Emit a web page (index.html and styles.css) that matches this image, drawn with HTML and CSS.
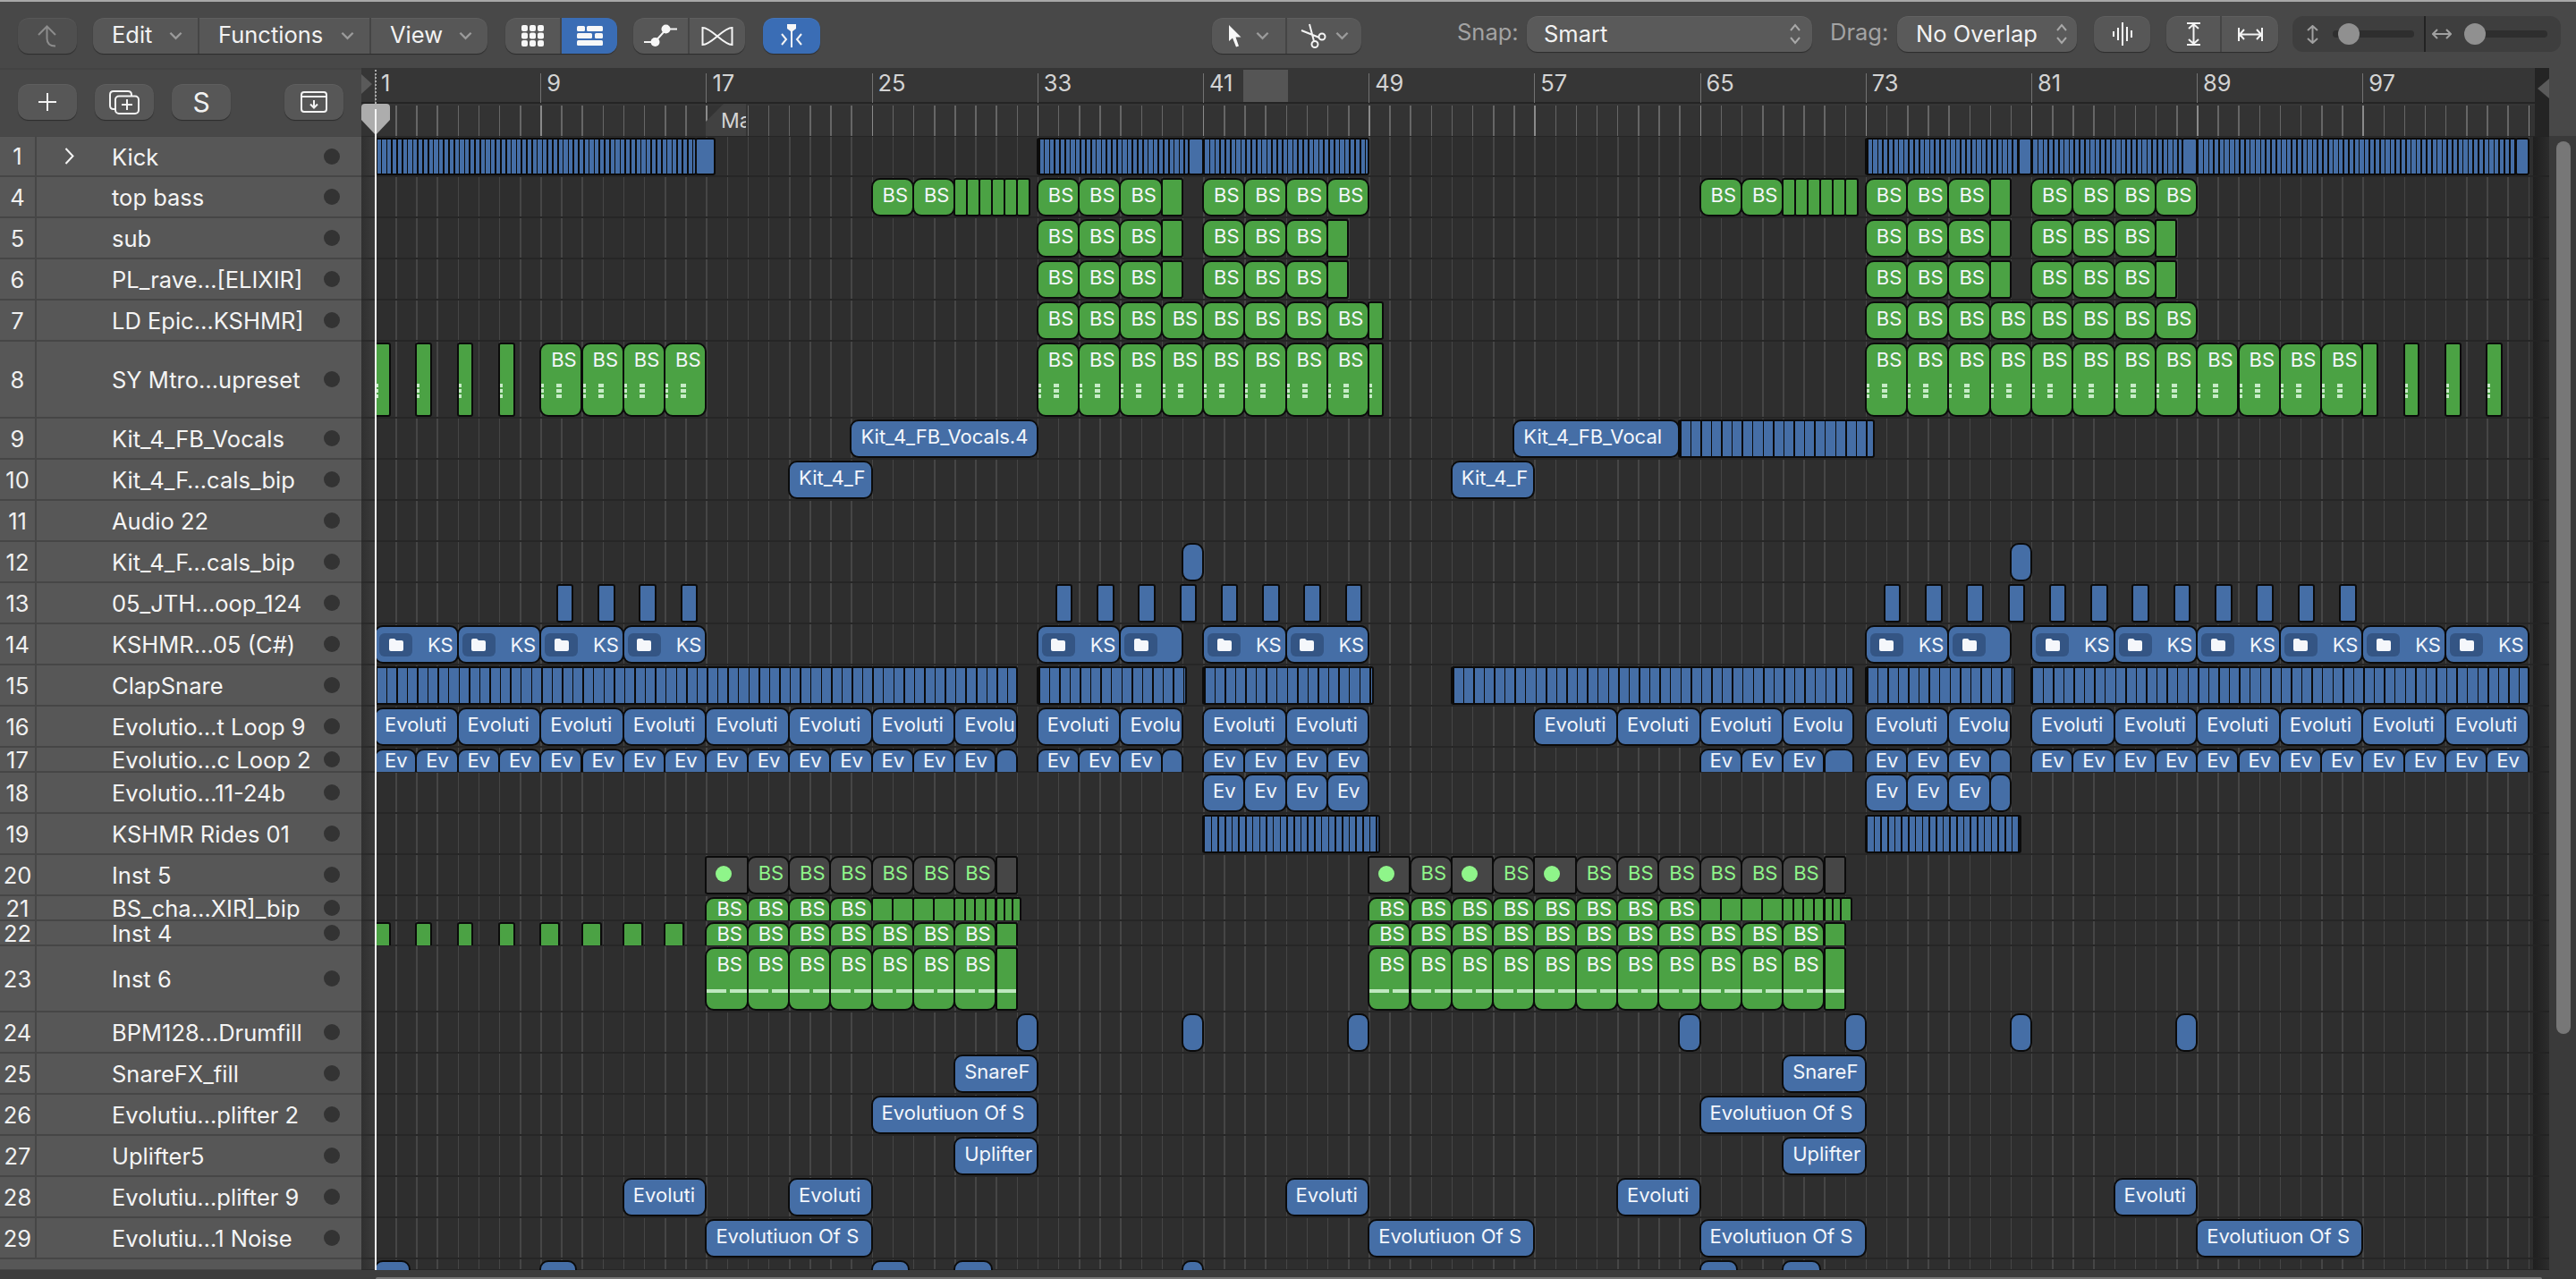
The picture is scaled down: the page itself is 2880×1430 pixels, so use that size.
FILE: index.html
```html
<!DOCTYPE html>
<html lang="en">
<head>
<meta charset="utf-8">
<title>Tracks</title>
<link rel="stylesheet" href="styles.css">
</head>
<body>
<div class="app">
  <div class="topline"></div>
  <header class="toolbar">
    <button class="btn dim w66"><svg width="22" height="25" viewBox="0 0 22 25"><path d="M1 11 10.500 1.500 20 11M10.500 2V15Q10.500 23.500 20 23.500" class="s-dim"/></svg></button>
    <div class="group ml18">
      <div class="seg w119"><span>Edit</span><svg class="chev" viewBox="0 0 16 10"><path d="M1.500 1.500 8 8 14.500 1.500"/></svg></div>
      <div class="seg w192"><span>Functions</span><svg class="chev" viewBox="0 0 16 10"><path d="M1.500 1.500 8 8 14.500 1.500"/></svg></div>
      <div class="seg w130"><span>View</span><svg class="chev" viewBox="0 0 16 10"><path d="M1.500 1.500 8 8 14.500 1.500"/></svg></div>
    </div>
    <div class="group ml20">
      <div class="seg icon w63"><svg width="25" height="24" viewBox="0 0 25 24" class="f-w"><rect x="0" y="0" width="7" height="7" rx="2"/><rect x="9" y="0" width="7" height="7" rx="2"/><rect x="18" y="0" width="7" height="7" rx="2"/><rect x="0" y="8.500" width="7" height="7" rx="2"/><rect x="9" y="8.500" width="7" height="7" rx="2"/><rect x="18" y="8.500" width="7" height="7" rx="2"/><rect x="0" y="17" width="7" height="7" rx="2"/><rect x="9" y="17" width="7" height="7" rx="2"/><rect x="18" y="17" width="7" height="7" rx="2"/></svg></div>
      <div class="seg icon w62 on"><svg width="29" height="22" viewBox="0 0 29 22" class="f-w"><rect x="0" y="0" width="9" height="6" rx="1.500"/><rect x="11" y="0" width="18" height="6" rx="1.500"/><rect x="0" y="8" width="17" height="6" rx="1.500"/><rect x="20" y="8" width="9" height="6" rx="1.500"/><rect x="0" y="16" width="29" height="6" rx="1.500"/></svg></div>
    </div>
    <div class="group ml18">
      <div class="seg icon w63"><svg width="38" height="26" viewBox="0 0 38 26"><path d="M0 20H12L25 5.500H37" class="s-w"/><circle cx="12.500" cy="20" r="5" class="f-w"/><circle cx="24.500" cy="5.500" r="5" class="f-w"/></svg></div>
      <div class="seg icon w62"><svg width="36" height="23" viewBox="0 0 36 23"><path d="M1.500 21V2C12 2 24 21 34.500 21V2C24 2 12 21 1.500 21Z" class="s-w"/></svg></div>
    </div>
    <button class="btn on w64 ml20"><svg width="26" height="28" viewBox="0 0 26 28"><path d="M8 1H18V6L14 9V27H12V9L8 6Z" class="f-w"/><path d="M2 12 7 18 2 24M24 12 19 18 24 24" class="s-w"/></svg></button>

    <div class="group ml438">
      <div class="seg icon w84"><svg width="14" height="25" viewBox="0 0 14 25" class="f-w mr16"><path d="M0 0V18L4 14.500 8 24.500 11 23.500 7.500 13.500H13.500Z"/></svg><svg class="chev" viewBox="0 0 16 10"><path d="M1.500 1.500 8 8 14.500 1.500"/></svg></div>
      <div class="seg icon w83"><svg width="29" height="28" viewBox="0 0 29 28" class="mr10"><path d="M1 8 21 16M10 1 15 20" class="s-w"/><circle cx="24" cy="15" r="3.500" class="s-w"/><circle cx="16" cy="23.500" r="3.500" class="s-w"/></svg><svg class="chev" viewBox="0 0 16 10"><path d="M1.500 1.500 8 8 14.500 1.500"/></svg></div>
    </div>
    <span class="lbl ml107">Snap:</span>
    <div class="select w319 ml12"><span>Smart</span><svg class="step" viewBox="0 0 14 26"><path d="M2 9 7 3 12 9M2 17 7 23 12 17"/></svg></div>
    <span class="lbl ml20">Drag:</span>
    <div class="select w201 ml9"><span>No Overlap</span><svg class="step" viewBox="0 0 14 26"><path d="M2 9 7 3 12 9M2 17 7 23 12 17"/></svg></div>
    <button class="btn up2 w63 ml19"><svg width="22" height="26" viewBox="0 0 22 26" class="f-w"><rect x="0" y="10" width="2" height="6"/><rect x="5" y="6" width="2" height="14"/><rect x="10" y="0" width="2" height="26"/><rect x="15" y="5" width="2" height="16"/><rect x="20" y="9" width="2" height="8"/></svg></button>
    <div class="group up2 ml18">
      <div class="seg icon w62"><svg width="15" height="26" viewBox="0 0 15 26"><path d="M0 1H15M0 25H15M7.500 1V25M2 7 7.500 2 13 7M2 19 7.500 24 13 19" class="s-w"/></svg></div>
      <div class="seg icon w63"><svg width="28" height="15" viewBox="0 0 28 15"><path d="M1 0V15M27 0V15M1 7.500H27M7 2 2 7.500 7 13M21 2 26 7.500 21 13" class="s-w"/></svg></div>
    </div>
    <div class="zooms ml16">
      <div class="zslider bordered"><svg width="15" height="21" viewBox="0 0 15 21"><path d="M7.500 1V20M2 6 7.500 1 13 6M2 15 7.500 20 13 15" class="s-g"/></svg><div class="track"><i class="thumb"></i></div></div>
      <div class="zslider"><svg width="22" height="14" viewBox="0 0 22 14"><path d="M1 7H21M6 2 1 7 6 12M16 2 21 7 16 12" class="s-g"/></svg><div class="track t2"><i class="thumb"></i></div></div>
    </div>
  </header>

  <section class="headrow">
    <div class="listhead">
      <button class="btn w66"><svg width="22" height="22" viewBox="0 0 22 22"><path d="M11 1V21M1 11H21" class="s-w"/></svg></button>
      <button class="btn w66"><svg width="34" height="27" viewBox="0 0 34 27"><path d="M6 21H5Q1 21 1 17V5Q1 1 5 1H21Q25 1 25 5V6" class="s-w"/><rect x="7" y="6.500" width="26" height="19.500" rx="4" class="s-w"/><path d="M20 10V22M14 16H26" class="s-w"/></svg></button>
      <button class="btn w66 letter">S</button>
      <button class="btn w66 ml60"><svg width="30" height="24" viewBox="0 0 30 24"><rect x="1" y="1" width="28" height="22" rx="3" class="s-w"/><path d="M1 6H29M15 10V18M11 14.500 15 18.500 19 14.500" class="s-w"/></svg></button>
    </div>
    <div class="ruler">
      <div class="bars">
        <i class="lit"></i>
        <span class="barno">1</span><span class="barno">9</span><span class="barno">17</span><span class="barno">25</span><span class="barno">33</span><span class="barno">41</span><span class="barno">49</span><span class="barno">57</span><span class="barno">65</span><span class="barno">73</span><span class="barno">81</span><span class="barno">89</span><span class="barno">97</span>
      </div>
      <div class="ticks"><div class="marker">Ma</div></div>
      <i class="loc-l"></i><i class="loc-r"></i>
    </div>
    <div class="corner"></div>
  </section>

  <section class="body">
    <div class="tracks">
      <div class="row h45"><div class="th"><span class="no">1</span><svg class="disc" width="11" height="19" viewBox="0 0 11 19"><path d="M1.500 1 9.500 9.500 1.500 18" class="s-w"/></svg><span class="name">Kick</span><i class="rec"></i></div><div class="gut"></div><div class="lane"></div><div class="rgut"></div></div>
      <div class="row h46"><div class="th"><span class="no">4</span><span class="name">top bass</span><i class="rec"></i></div><div class="gut"></div><div class="lane"></div><div class="rgut"></div></div>
      <div class="row h46"><div class="th"><span class="no">5</span><span class="name">sub</span><i class="rec"></i></div><div class="gut"></div><div class="lane"></div><div class="rgut"></div></div>
      <div class="row h46"><div class="th"><span class="no">6</span><span class="name">PL_rave…[ELIXIR]</span><i class="rec"></i></div><div class="gut"></div><div class="lane"></div><div class="rgut"></div></div>
      <div class="row h46"><div class="th"><span class="no">7</span><span class="name">LD Epic…KSHMR]</span><i class="rec"></i></div><div class="gut"></div><div class="lane"></div><div class="rgut"></div></div>
      <div class="row h86"><div class="th"><span class="no">8</span><span class="name">SY Mtro…upreset</span><i class="rec"></i></div><div class="gut"></div><div class="lane dots"></div><div class="rgut"></div></div>
      <div class="row h46"><div class="th"><span class="no">9</span><span class="name">Kit_4_FB_Vocals</span><i class="rec"></i></div><div class="gut"></div><div class="lane"></div><div class="rgut"></div></div>
      <div class="row h46"><div class="th"><span class="no">10</span><span class="name">Kit_4_F…cals_bip</span><i class="rec"></i></div><div class="gut"></div><div class="lane"></div><div class="rgut"></div></div>
      <div class="row h46"><div class="th"><span class="no">11</span><span class="name">Audio 22</span><i class="rec"></i></div><div class="gut"></div><div class="lane"></div><div class="rgut"></div></div>
      <div class="row h46"><div class="th"><span class="no">12</span><span class="name">Kit_4_F…cals_bip</span><i class="rec"></i></div><div class="gut"></div><div class="lane"></div><div class="rgut"></div></div>
      <div class="row h46"><div class="th"><span class="no">13</span><span class="name">05_JTH…oop_124</span><i class="rec"></i></div><div class="gut"></div><div class="lane"></div><div class="rgut"></div></div>
      <div class="row h46"><div class="th"><span class="no">14</span><span class="name">KSHMR…05 (C#)</span><i class="rec"></i></div><div class="gut"></div><div class="lane"></div><div class="rgut"></div></div>
      <div class="row h46"><div class="th"><span class="no">15</span><span class="name">ClapSnare</span><i class="rec"></i></div><div class="gut"></div><div class="lane"></div><div class="rgut"></div></div>
      <div class="row h46"><div class="th"><span class="no">16</span><span class="name">Evolutio…t Loop 9</span><i class="rec"></i></div><div class="gut"></div><div class="lane"></div><div class="rgut"></div></div>
      <div class="row h28"><div class="th"><span class="no">17</span><span class="name">Evolutio…c Loop 2</span><i class="rec"></i></div><div class="gut"></div><div class="lane short"></div><div class="rgut"></div></div>
      <div class="row h46"><div class="th"><span class="no">18</span><span class="name">Evolutio…11-24b</span><i class="rec"></i></div><div class="gut"></div><div class="lane"></div><div class="rgut"></div></div>
      <div class="row h46"><div class="th"><span class="no">19</span><span class="name">KSHMR Rides 01</span><i class="rec"></i></div><div class="gut"></div><div class="lane"></div><div class="rgut"></div></div>
      <div class="row h46"><div class="th"><span class="no">20</span><span class="name">Inst 5</span><i class="rec"></i></div><div class="gut"></div><div class="lane"></div><div class="rgut"></div></div>
      <div class="row h28"><div class="th"><span class="no">21</span><span class="name">BS_cha…XIR]_bip</span><i class="rec"></i></div><div class="gut"></div><div class="lane short"></div><div class="rgut"></div></div>
      <div class="row h28"><div class="th"><span class="no">22</span><span class="name">Inst 4</span><i class="rec"></i></div><div class="gut"></div><div class="lane short"></div><div class="rgut"></div></div>
      <div class="row h74"><div class="th"><span class="no">23</span><span class="name">Inst 6</span><i class="rec"></i></div><div class="gut"></div><div class="lane dash"></div><div class="rgut"></div></div>
      <div class="row h46"><div class="th"><span class="no">24</span><span class="name">BPM128…Drumfill</span><i class="rec"></i></div><div class="gut"></div><div class="lane"></div><div class="rgut"></div></div>
      <div class="row h46"><div class="th"><span class="no">25</span><span class="name">SnareFX_fill</span><i class="rec"></i></div><div class="gut"></div><div class="lane"></div><div class="rgut"></div></div>
      <div class="row h46"><div class="th"><span class="no">26</span><span class="name">Evolutiu…plifter 2</span><i class="rec"></i></div><div class="gut"></div><div class="lane"></div><div class="rgut"></div></div>
      <div class="row h46"><div class="th"><span class="no">27</span><span class="name">Uplifter5</span><i class="rec"></i></div><div class="gut"></div><div class="lane"></div><div class="rgut"></div></div>
      <div class="row h46"><div class="th"><span class="no">28</span><span class="name">Evolutiu…plifter 9</span><i class="rec"></i></div><div class="gut"></div><div class="lane"></div><div class="rgut"></div></div>
      <div class="row h46"><div class="th"><span class="no">29</span><span class="name">Evolutiu…1 Noise</span><i class="rec"></i></div><div class="gut"></div><div class="lane"></div><div class="rgut"></div></div>
      <div class="row h13"><div class="th"></div><div class="gut"></div><div class="lane clip"></div><div class="rgut"></div></div>
    </div>
    <div class="vscroll"><i class="vthumb"></i></div>
  </section>
  <footer class="hscroll"><i class="hthumb"></i></footer>

  <div class="playhead">
    <i class="dotline"></i>
    <svg class="cap" width="32" height="35" viewBox="0 0 32 35"><path d="M0 4Q0 0 4 0H28Q32 0 32 4V18L16 35 0 18Z"/></svg>
    <i class="phline"></i>
  </div>
</div>
<script src="app.js"></script>
</body>
</html>
```

FILE: styles.css
```css
*{box-sizing:border-box}
html,body{margin:0;padding:0;background:#484848}
body{width:2880px;height:1430px;overflow:hidden;font-family:Inter,"Liberation Sans",sans-serif;font-size:25.500px;color:#f2f2f2}
button{font:inherit;color:inherit;border:0;padding:0}
svg{display:block;flex:none}
.app{position:relative;width:2880px;height:1430px;display:flex;flex-direction:column}
.topline{height:2px;background:#a8a8a8}

.s-w{fill:none;stroke:#f4f4f4;stroke-width:2}
.s-dim{fill:none;stroke:#8c8c8c;stroke-width:2}
.s-g{fill:none;stroke:#a0a0a0;stroke-width:2}
.f-w{fill:#f7f7f7}

.toolbar{height:74px;padding:18px 0 0 20px;display:flex;align-items:flex-start;background:#484848}
.btn{height:40px;border-radius:12px;background:#575757;display:flex;align-items:center;justify-content:center;box-shadow:0 1px 1px rgba(0,0,0,.4),inset 0 1px 0 rgba(255,255,255,.05)}
.btn.dim{background:#4f4f4f}
.btn.on,.seg.on{background:#3a6db5}
.group{height:40px;display:flex;border-radius:12px;overflow:hidden;background:#575757;box-shadow:0 1px 1px rgba(0,0,0,.4),inset 0 1px 0 rgba(255,255,255,.05)}
.up2{margin-top:-2px!important}
.seg{height:40px;display:flex;align-items:center;justify-content:space-between;padding:0 17px 0 21px;border-right:2px solid #454545}
.seg span{margin-top:-3px}
.seg:last-child{border-right:0}
.seg.on{border:0}
.seg.icon{justify-content:center;padding:0}
.chev{width:15px;height:10px;fill:none;stroke:#9b9b9b;stroke-width:2.500}
.mr16{margin-right:16px}.mr10{margin-right:10px}
.w63{width:63px}.w62{width:62px}.w64{width:64px}.w66{width:66px}.w84{width:84px}.w83{width:83px}
.w119{width:119px}.w192{width:192px}.w130{width:130px}.w319{width:319px}.w201{width:201px}
.ml18{margin-left:18px}.ml20{margin-left:20px}.ml19{margin-left:19px}.ml16{margin-left:16px}.ml12{margin-left:12px}.ml9{margin-left:9px}.ml438{margin-left:438px}.ml107{margin-left:107px}.ml60{margin-left:60px}
.lbl{height:40px;line-height:36px;color:#a3a3a3;margin-top:-2px;width:66px;white-space:nowrap}
.select{height:40px;margin-top:-2px;border-radius:12px;background:#5a5a5a;display:flex;align-items:center;justify-content:space-between;padding:0 12px 0 19px;box-shadow:0 1px 1px rgba(0,0,0,.4),inset 0 1px 0 rgba(255,255,255,.05)}
.select span{margin-top:-2px}
.select.w201{padding-left:21px;padding-right:10px;white-space:nowrap}
.step{width:14px;height:26px;fill:none;stroke:#a8a8a8;stroke-width:2}
.zooms{width:300px;height:40px;margin-top:-2px;border-radius:12px;background:#3e3e3e;display:flex}
.zslider{width:149px;display:flex;align-items:center;padding-left:15px}
.zslider.bordered{border-right:2px solid #232323}
.zslider:last-child{padding-left:7px}
.track{position:relative;width:91px;height:8px;border-radius:4px;background:#2e2e2e;margin-left:15px}
.track.t2{margin-left:14px;width:93px}
.thumb{position:absolute;left:6px;top:-8px;width:24px;height:24px;border-radius:50%;background:#909090}
.t2 .thumb{left:0}

.headrow{height:76px;display:flex}
.listhead{width:404px;padding:16px 0 0 20px;display:flex;gap:20px;align-items:flex-start;background:#484848;border-top:2px solid #434343}
.listhead .ml60{margin-left:40px}
.letter{font-size:30px}
.ruler{position:relative;width:2446px;background:#363636;display:flex;flex-direction:column}
.bars{height:40px;display:flex;padding:6px 0 0 15px;border-bottom:2px solid #242424}
.barno{width:185.200px;height:33px;line-height:21px;padding-left:6px;border-left:1.500px solid #727272;color:#d4d4d4}
.lit{position:absolute;left:986px;top:2px;width:50px;height:36px;background:#555}
.ticks{position:relative;flex:1;background-color:#333;background-image:repeating-linear-gradient(90deg,#8a8a8a 0 1.500px,transparent 1.500px 185.200px),repeating-linear-gradient(90deg,#666 0 1.500px,transparent 1.500px 23.150px);background-position:15px 0,15px 0;background-size:2417px 100%;background-repeat:no-repeat;margin-top:2px}
.marker{position:absolute;left:385px;top:-2px;width:45px;height:38px;padding:0 0 0 17px;line-height:38px;font-size:23px;overflow:hidden;white-space:nowrap;color:#d4d4d4;background:#414141;clip-path:polygon(0 20px,20px 0,100% 0,100% 100%,0 100%)}
.loc-l{position:absolute;left:0;top:7px;width:12px;height:22px;background:#5a5a5a;clip-path:polygon(0 0,100% 50%,0 100%)}
.loc-r{position:absolute;left:2430px;top:0;width:16px;height:76px;background:#242424}
.loc-r::after{content:"";position:absolute;left:3px;top:12px;width:13px;height:22px;background:#5a5a5a;clip-path:polygon(100% 0,0 50%,100% 100%)}
.corner{width:30px;background:#484848}

.body{flex:1;display:flex;min-height:0}
.tracks{width:2850px;display:flex;flex-direction:column}
.vscroll{width:30px;background:#3a3a3a;padding:6px 0 0 8px}
.vthumb{display:block;width:16px;height:998px;border-radius:8px;background:#777}
.row{display:flex;flex:none}
.h13{height:13px}.h28{height:28px}.h45{height:45px}.h46{height:46px}.h74{height:74px}.h86{height:86px}
.th{width:404px;display:flex;align-items:center;position:relative;background:#575757;border-top:1px solid #464646;border-bottom:1px solid #464646;overflow:hidden}
.no{width:41px;height:100%;flex:none;display:flex;align-items:center;justify-content:center;border-right:2px solid #464646;color:#f0f0f0}
.name{position:absolute;left:125px;top:50%;transform:translateY(-50%);white-space:nowrap;color:#f4f4f4}
.disc{position:absolute;left:72px;top:50%;margin-top:-10px}
.rec{position:absolute;left:362px;top:50%;margin-top:-9px;width:18px;height:18px;border-radius:50%;background:#333}
.gut{width:15px;background:linear-gradient(90deg,#303030,#3b3b3b);border-top:1px solid #2a2a2a;border-bottom:1px solid #2a2a2a}
.lane{position:relative;width:2413px;overflow:hidden;background-color:#2e2e2e;background-image:linear-gradient(#262626,#262626),linear-gradient(#262626,#262626),repeating-linear-gradient(90deg,#464646 0 1.500px,transparent 1.500px 23.150px);background-size:100% 1px,100% 1px,100% 100%;background-position:0 0,0 100%,0 0;background-repeat:no-repeat}
.rgut{width:18px;background:linear-gradient(90deg,#1f1f1f,#2c2c2c);border-top:1px solid #232323;border-bottom:1px solid #232323}

.r{position:absolute;top:2px;bottom:1px;border:2px solid #0b0b0b;border-radius:10px;overflow:hidden;white-space:nowrap;font-size:22px;line-height:34px;padding-left:10px;color:#f3f6fb}
.short .r{bottom:-8px;line-height:22px}
.clip .r{bottom:-30px}
.b{background-color:#456ea6}
.g{background-color:#4ba244}
.d{background-color:#464646;color:#8ff58a}
.sq{border-radius:3px;padding:0}
.st{border-radius:3px;padding:0;background-image:repeating-linear-gradient(90deg,#0b0b0b 0 1.500px,transparent 1.500px var(--p))}
.bs{padding-left:11px}
.lit-dot{display:block;width:18px;height:18px;margin:9px 0 0 10px;border-radius:50%;background:#8ff58a}
.ks{display:flex;justify-content:space-between;align-items:center;padding:0 4px 0 4px}
.chip{width:37px;height:26px;border-radius:6px;background:#345584;display:flex;align-items:center;justify-content:center}
.chip svg{fill:#f5f7fb}
.dots .r::before,.dots .r::after{content:"";position:absolute;top:44px;height:16px;background:repeating-linear-gradient(180deg,#c7ecc7 0 4px,transparent 4px 6px)}
.dots .r::before{left:0;width:3px}
.dots .r::after{left:17px;width:6px}
.dash .r::before{content:"";position:absolute;left:0;right:0;top:45px;height:4px;background:repeating-linear-gradient(90deg,#bfe8bf 0 22px,transparent 22px 26px)}

.hscroll{height:10px;background:#3d3d3d;position:relative}
.hthumb{position:absolute;left:420px;top:8px;width:2422px;height:2px;border-radius:2px 2px 0 0;background:#777}
.playhead{position:absolute;left:404px;top:78px;width:32px;height:1342px;pointer-events:none}
.dotline{position:absolute;left:15px;top:0;height:38px;width:0;border-left:2px dotted #aaa}
.cap{position:absolute;left:0;top:38px;fill:#adadad}
.phline{position:absolute;left:15px;top:44px;bottom:0;width:2px;background:#f4f4f4}
```

FILE: app.js
```js
const BAR = 23.15;

function run(start, count, step, label, cls) {
  const out = [];
  for (let i = 0; i < count; i++) out.push([start + i * step, start + (i + 1) * step, label, cls]);
  return out;
}
function cells(edges, cls) {
  const out = [];
  for (let i = 0; i < edges.length - 1; i++) out.push([edges[i], edges[i + 1], '', cls]);
  return out;
}
const BS = (s, n) => run(s, n, 2, 'BS', 'g bs');
const GE = (s, e) => [[s, e, '', 'g sq']];
const BL = (s, e, l) => [[s, e, l || '', 'b']];
const ST = (s, e, p) => [[s, e, '', 'b st', p]];
const PL = (s, e) => [[s, e, '', 'b sq']];
const EV = (s, n) => run(s, n, 2, 'Ev', 'b');
const VO = (s, n) => run(s, n, 4, 'Evoluti', 'b');
const KS = (s, n) => run(s, n, 4, '@KS', 'b ks');
const DK = (s, n) => run(s, n, 2, 'BS', 'd bs');
const DOT = (s) => [[s, s + 2, '@dot', 'd sq']];
const SM = (s, n) => { let o = []; for (let i = 0; i < n; i++) o = o.concat(GE(s + i * 2, s + i * 2 + 0.72)); return o; };
const small = (a, cls) => a.map(s => [s, s + 1, '', cls || 'b']);

const rows = [
  /* 1  */ [...ST(1, 16.5, 5.8), ...PL(16.5, 17.4), ...ST(33, 40.3, 5.8), ...PL(40.3, 41), ...ST(41, 49, 5.8), ...ST(73, 80.4, 5.8), ...PL(80.4, 81), ...ST(81, 88.3, 5.8), ...PL(88.3, 89), ...ST(89, 104.4, 5.8), ...PL(104.4, 105)],
  /* 4  */ [...BS(25, 2), ...cells([29, 29.6, 30.2, 30.8, 31.4, 32, 32.6], 'g sq'), ...BS(33, 3), ...GE(39, 40), ...BS(41, 4), ...BS(65, 2), ...cells([69, 69.6, 70.2, 70.8, 71.4, 72, 72.6], 'g sq'), ...BS(73, 3), ...GE(79, 80), ...BS(81, 4)],
  /* 5  */ [...BS(33, 3), ...GE(39, 40), ...BS(41, 3), ...GE(47, 48), ...BS(73, 3), ...GE(79, 80), ...BS(81, 3), ...GE(87, 88)],
  /* 6  */ [...BS(33, 3), ...GE(39, 40), ...BS(41, 3), ...GE(47, 48), ...BS(73, 3), ...GE(79, 80), ...BS(81, 3), ...GE(87, 88)],
  /* 7  */ [...BS(33, 8), ...GE(49, 49.7), ...BS(73, 8)],
  /* 8  */ [...SM(1, 4), ...BS(9, 4), ...BS(33, 8), ...GE(49, 49.7), ...BS(73, 12), ...SM(97, 4)],
  /* 9  */ [...BL(24, 33, 'Kit_4_FB_Vocals.4'), ...BL(56, 64, 'Kit_4_FB_Vocal'), ...ST(64, 73.4, 11.57)],
  /* 10 */ [...BL(21, 25, 'Kit_4_F'), ...BL(53, 57, 'Kit_4_F')],
  /* 11 */ [],
  /* 12 */ [...small([40, 80])],
  /* 13 */ [...run(9.8, 4, 2, '', 'b sq w34'), ...run(33.9, 8, 2, '', 'b sq w34'), ...run(73.9, 12, 2, '', 'b sq w34')],
  /* 14 */ [...KS(1, 4), ...KS(33, 1), [37, 40, '@F', 'b ks'], ...KS(41, 2), ...KS(73, 1), [77, 80, '@F', 'b ks'], ...KS(81, 6)],
  /* 15 */ [...ST(1, 32, 11.57), ...ST(33, 40.2, 11.57), ...ST(41, 49.2, 11.57), ...ST(53, 72.4, 11.57), ...ST(73, 80.2, 11.57), ...ST(81, 105, 11.57)],
  /* 16 */ [...VO(1, 7), [29, 32, 'Evolu', 'b'], ...VO(33, 1), [37, 40, 'Evolu', 'b'], ...VO(41, 2), ...VO(57, 3), [69, 72.4, 'Evolu', 'b'], ...VO(73, 1), [77, 80, 'Evolu', 'b'], ...VO(81, 6)],
  /* 17 */ [...EV(1, 15), [31, 32, '', 'b'], ...EV(33, 3), [39, 40, '', 'b'], ...EV(41, 4), ...EV(65, 3), [71, 72.4, '', 'b'], ...EV(73, 3), [79, 80, '', 'b'], ...EV(81, 12)],
  /* 18 */ [...EV(41, 4), ...EV(73, 3), [79, 80, '', 'b']],
  /* 19 */ [...ST(41, 49.5, 7.7), ...ST(73, 80.5, 7.7)],
  /* 20 */ [...DOT(17), ...DK(19, 6), [31, 32, '', 'd sq'], ...DOT(49), ...DK(51, 1), ...DOT(53), ...DK(55, 1), ...DOT(57), ...DK(59, 6), [71, 72, '', 'd sq']],
  /* 21 */ [...BS(17, 4), ...cells([25, 26, 27, 28, 29, 29.5, 30, 30.5, 31, 31.4, 31.8, 32.2], 'g sq'), ...BS(49, 8), ...cells([65, 66, 67, 68, 69, 69.5, 70, 70.5, 71, 71.4, 71.8, 72.3], 'g sq')],
  /* 22 */ [...SM(1, 4), ...run(9, 4, 2, '', 'g sq w9'), ...BS(17, 7), ...GE(31, 32), ...BS(49, 11), ...GE(71, 72)],
  /* 23 */ [...BS(17, 7), ...GE(31, 32), ...BS(49, 11), ...GE(71, 72)],
  /* 24 */ [...small([32, 40, 48, 64, 72, 80, 88])],
  /* 25 */ [...BL(29, 33, 'SnareF'), ...BL(69, 73, 'SnareF')],
  /* 26 */ [...BL(25, 33, 'Evolutiuon Of S'), ...BL(65, 73, 'Evolutiuon Of S')],
  /* 27 */ [...BL(29, 33, 'Uplifter'), ...BL(69, 73, 'Uplifter')],
  /* 28 */ [...BL(13, 17, 'Evoluti'), ...BL(21, 25, 'Evoluti'), ...BL(45, 49, 'Evoluti'), ...BL(61, 65, 'Evoluti'), ...BL(85, 89, 'Evoluti')],
  /* 29 */ [...BL(17, 25, 'Evolutiuon Of S'), ...BL(49, 57, 'Evolutiuon Of S'), ...BL(65, 73, 'Evolutiuon Of S'), ...BL(89, 97, 'Evolutiuon Of S')],
  /* 30 */ [...BL(1, 2.7), ...BL(9, 10.7), ...BL(25, 26.8), ...BL(29, 30.8), ...BL(40, 41), ...BL(65, 66.8), ...BL(69, 70.8)]
];

function folderChip() {
  const chip = document.createElement('span');
  chip.className = 'chip';
  chip.innerHTML = '<svg width="18" height="16" viewBox="0 0 18 16"><path d="M1 3Q1 1 3 1H7L9 3H15Q17 3 17 5V13Q17 15 15 15H3Q1 15 1 13Z"/></svg>';
  return chip;
}

const lanes = document.querySelectorAll('.lane');
rows.forEach((list, i) => {
  const lane = lanes[i];
  list.forEach(([a, b, label, cls, period]) => {
    const el = document.createElement('div');
    el.className = 'r ' + cls;
    let end = b;
    if (cls.includes('w34')) end = a + 0.76;
    if (cls.includes('w9')) end = a + 0.92;
    el.style.left = ((a - 1) * BAR - 1).toFixed(2) + 'px';
    el.style.width = ((end - a) * BAR + 2).toFixed(2) + 'px';
    if (period) el.style.setProperty('--p', period + 'px');
    if (label === '@KS') {
      el.appendChild(folderChip());
      el.appendChild(document.createTextNode('KS'));
    } else if (label === '@F') {
      el.appendChild(folderChip());
    } else if (label === '@dot') {
      const d = document.createElement('i');
      d.className = 'lit-dot';
      el.appendChild(d);
    } else if (label) {
      el.textContent = label;
    }
    lane.appendChild(el);
  });
});
```
